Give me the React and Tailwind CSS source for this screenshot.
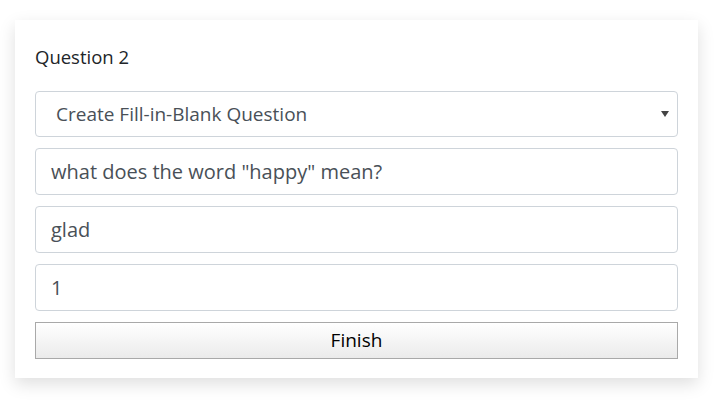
export default function App() {
  const font = { fontFamily: '"Open Sans", "Noto Sans", sans-serif' };
  return (
    <div className="w-[727px] h-[404px] bg-white pt-[20px] pl-[15px]" style={font}>
      <div className="w-[683px] h-[358px] bg-white shadow-[0_6px_16px_rgba(0,0,0,0.13)] px-[20px] pt-[20px] flex flex-col">
        <div className="h-[51px] pt-[3px] text-[18.5px] leading-[27px] text-[#212529]">Question 2</div>
        <div className="h-[46px] border border-[#ced4da] rounded-[4px] flex items-center justify-between pl-[20px] pr-[8px] text-[19px] text-[#495057]">
          <span>Create Fill-in-Blank Question</span>
          <svg width="8" height="6" viewBox="0 0 8 6"><path d="M0 0H8L4 6Z" fill="#444" /></svg>
        </div>
        <div className="mt-[11px] h-[47px] border border-[#ced4da] rounded-[4px] flex items-center pl-[15px] text-[20px] text-[#495057]">what does the word "happy" mean?</div>
        <div className="mt-[11px] h-[47px] border border-[#ced4da] rounded-[4px] flex items-center pl-[15px] text-[20px] text-[#495057]">glad</div>
        <div className="mt-[11px] h-[47px] border border-[#ced4da] rounded-[4px] flex items-center pl-[15px] text-[20px] text-[#495057]">1</div>
        <div className="mt-[11px] h-[37px] border border-[#a9a9a9] bg-gradient-to-b from-white to-[#ebebeb] flex items-center justify-center text-[19px] text-black">Finish</div>
      </div>
    </div>
  );
}
